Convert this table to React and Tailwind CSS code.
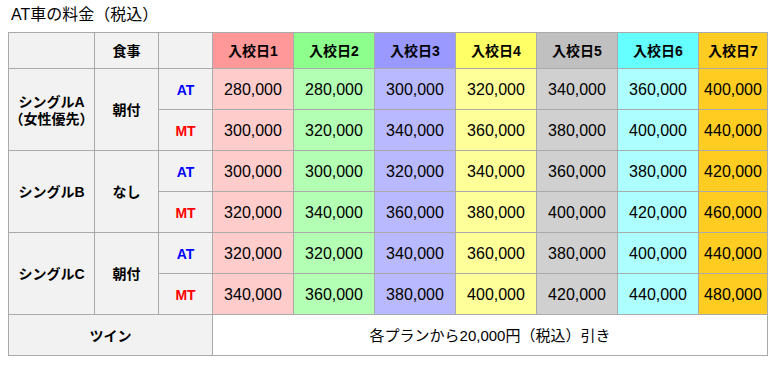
import React from "react";

const headColors = ["bg-[#ff9999]", "bg-[#8cff8c]", "bg-[#9999ff]", "bg-[#ffff66]", "bg-[#c0c0c0]", "bg-[#66ffff]", "bg-[#ffcc22]"];
const cellColors = ["bg-[#ffcccc]", "bg-[#b3ffb3]", "bg-[#b9b9ff]", "bg-[#ffff99]", "bg-[#d0d0d0]", "bg-[#adffff]", "bg-[#ffcc22]"];

const plans = [
  {
    name: (
      <>
        シングルA
        <br />
        （女性優先）
      </>
    ),
    meal: "朝付",
    at: ["280,000", "280,000", "300,000", "320,000", "340,000", "360,000", "400,000"],
    mt: ["300,000", "320,000", "340,000", "360,000", "380,000", "400,000", "440,000"],
  },
  {
    name: "シングルB",
    meal: "なし",
    at: ["300,000", "300,000", "320,000", "340,000", "360,000", "380,000", "420,000"],
    mt: ["320,000", "340,000", "360,000", "380,000", "400,000", "420,000", "460,000"],
  },
  {
    name: "シングルC",
    meal: "朝付",
    at: ["320,000", "320,000", "340,000", "360,000", "380,000", "400,000", "440,000"],
    mt: ["340,000", "360,000", "380,000", "400,000", "420,000", "440,000", "480,000"],
  },
];

const td = "border border-[#aaaaaa] text-center align-middle px-0 pb-0 pt-[2px]";

export default function App() {
  return (
    <div
      className="w-[774px] h-[371px] bg-white text-black text-[14px]"
      style={{ fontFamily: '"Liberation Sans", "Noto Sans CJK JP", sans-serif' }}
    >
      <div className="h-[32px] pl-[11px] pt-[5px] text-[16px] leading-[20px]">AT車の料金（税込）</div>
      <table className="ml-[8px] border-collapse table-fixed w-[759px]">
        <colgroup>
          <col className="w-[86px]" />
          <col className="w-[64px]" />
          <col className="w-[54px]" />
          <col className="w-[81px]" />
          <col className="w-[81px]" />
          <col className="w-[81px]" />
          <col className="w-[81px]" />
          <col className="w-[81px]" />
          <col className="w-[81px]" />
          <col className="w-[69px]" />
        </colgroup>
        <tbody>
          <tr className="h-[36px]">
            <td className={`${td} bg-[#f2f2f2]`}></td>
            <td className={`${td} bg-[#f2f2f2] font-bold`}>食事</td>
            <td className={`${td} bg-[#f2f2f2]`}></td>
            {headColors.map((c, i) => (
              <td key={i} className={`${td} ${c} font-bold`}>
                入校日{i + 1}
              </td>
            ))}
          </tr>
          {plans.map((p, pi) => (
            <React.Fragment key={pi}>
              <tr className="h-[41px]">
                <td rowSpan={2} className={`${td} bg-[#f2f2f2] font-semibold leading-[17px]`}>
                  {p.name}
                </td>
                <td rowSpan={2} className={`${td} bg-[#f2f2f2] font-bold`}>
                  {p.meal}
                </td>
                <td className={`${td} bg-[#f2f2f2] font-bold text-[#0000ff]`}>AT</td>
                {p.at.map((v, i) => (
                  <td key={i} className={`${td} ${cellColors[i]} text-[16px]`}>
                    {v}
                  </td>
                ))}
              </tr>
              <tr className="h-[41px]">
                <td className={`${td} bg-[#f2f2f2] font-bold text-[#ff0000]`}>MT</td>
                {p.mt.map((v, i) => (
                  <td key={i} className={`${td} ${cellColors[i]} text-[16px]`}>
                    {v}
                  </td>
                ))}
              </tr>
            </React.Fragment>
          ))}
          <tr className="h-[41px]">
            <td colSpan={3} className={`${td} bg-[#f2f2f2] font-bold`}>
              ツイン
            </td>
            <td colSpan={7} className={`${td} bg-white text-[15px]`}>
              各プランから20,000円（税込）引き
            </td>
          </tr>
        </tbody>
      </table>
    </div>
  );
}
